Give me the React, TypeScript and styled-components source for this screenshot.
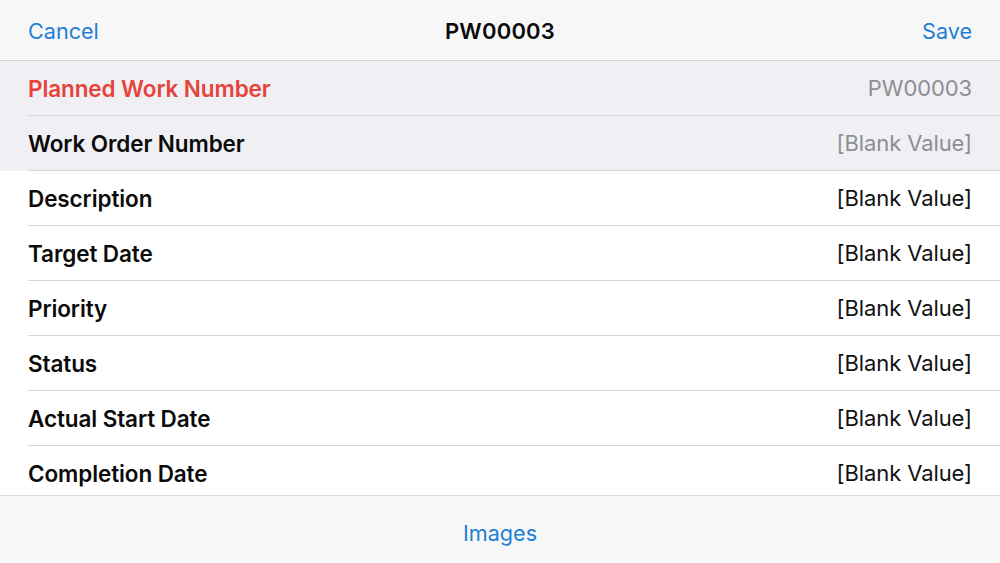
import React from "react";
import styled, { createGlobalStyle } from "styled-components";

const Global = createGlobalStyle`
  html, body { margin: 0; padding: 0; background: #ffffff; }
  body { font-family: Inter, "Open Sans", "Liberation Sans", sans-serif; -webkit-font-smoothing: antialiased; }
  * { box-sizing: border-box; }
`;

const Screen = styled.div`
  width: 1000px;
  height: 563px;
  display: flex;
  flex-direction: column;
  overflow: hidden;
  background: #ffffff;
`;

const NavBar = styled.header`
  height: 61px;
  flex: none;
  display: grid;
  grid-template-columns: 1fr auto 1fr;
  align-items: center;
  padding: 1px 28px 0;
  background: #f7f7f8;
  border-bottom: 1px solid #d3d3d6;
`;

const NavButton = styled.span<{ $align: "left" | "right" }>`
  color: #1d7fd5;
  font-size: 21.6px;
  font-weight: 400;
  justify-self: ${(p) => (p.$align === "left" ? "start" : "end")};
`;

const Title = styled.h1`
  margin: 0;
  font-size: 22px;
  font-weight: 600;
  color: #0a0a0a;
  letter-spacing: 0.2px;
`;

const List = styled.div`
  flex: 1;
  overflow: hidden;
`;

const Row = styled.div<{ $readonly?: boolean }>`
  height: 55px;
  padding-left: 28px;
  background: ${(p) => (p.$readonly ? "#f0eff4" : "#ffffff")};
`;

const RowInner = styled.div`
  height: 100%;
  display: flex;
  align-items: center;
  justify-content: space-between;
  padding-right: 28px;
  border-bottom: 1px solid #d8d8dc;
`;

const Label = styled.span<{ $required?: boolean }>`
  font-size: 22.5px;
  font-weight: 600;
  color: ${(p) => (p.$required ? "#e6433b" : "#0b0b0b")};
  letter-spacing: -0.1px;
`;

const Value = styled.span<{ $muted?: boolean }>`
  font-size: 22px;
  font-weight: 400;
  color: ${(p) => (p.$muted ? "#8e8e93" : "#111111")};
  letter-spacing: -0.1px;
`;

const TabBar = styled.footer`
  height: 68px;
  flex: none;
  display: flex;
  align-items: center;
  justify-content: center;
  padding-top: 7px;
  background: #f7f7f8;
  border-top: 1px solid #dcdcdf;
`;

const TabItem = styled.span`
  color: #1d7fd5;
  font-size: 21.6px;
`;

type Field = { label: string; value: string; readonly?: boolean; required?: boolean };

const fields: Field[] = [
  { label: "Planned Work Number", value: "PW00003", readonly: true, required: true },
  { label: "Work Order Number", value: "[Blank Value]", readonly: true },
  { label: "Description", value: "[Blank Value]" },
  { label: "Target Date", value: "[Blank Value]" },
  { label: "Priority", value: "[Blank Value]" },
  { label: "Status", value: "[Blank Value]" },
  { label: "Actual Start Date", value: "[Blank Value]" },
  { label: "Completion Date", value: "[Blank Value]" },
];

export default function App() {
  return (
    <>
      <Global />
      <Screen>
        <NavBar>
          <NavButton $align="left">Cancel</NavButton>
          <Title>PW00003</Title>
          <NavButton $align="right">Save</NavButton>
        </NavBar>
        <List>
          {fields.map((f) => (
            <Row key={f.label} $readonly={f.readonly}>
              <RowInner>
                <Label $required={f.required}>{f.label}</Label>
                <Value $muted={f.readonly}>{f.value}</Value>
              </RowInner>
            </Row>
          ))}
        </List>
        <TabBar>
          <TabItem>Images</TabItem>
        </TabBar>
      </Screen>
    </>
  );
}
